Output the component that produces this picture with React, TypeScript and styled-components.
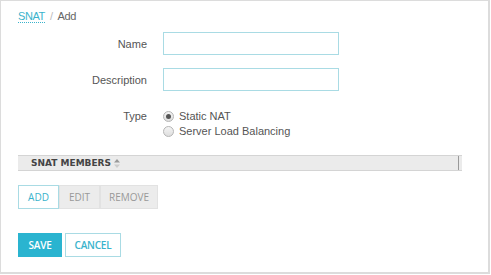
import React from "react";
import styled, { createGlobalStyle } from "styled-components";

const GlobalStyle = createGlobalStyle`
  html, body {
    margin: 0;
    padding: 0;
    background: #ffffff;
  }
  body {
    font-family: "Liberation Sans", Arial, sans-serif;
    font-size: 11px;
    color: #555;
  }
`;

const Frame = styled.div`
  box-sizing: border-box;
  width: 490px;
  height: 274px;
  border: 1px solid #dcdcdc;
  border-right-width: 2px;
  border-bottom-width: 2px;
  padding: 8px 27px 0 17px;
`;

const Breadcrumb = styled.div`
  display: flex;
  align-items: center;
  gap: 5px;
  height: 14px;
  font-size: 11px;
  letter-spacing: -0.4px;
  color: #666;
`;

const CrumbLink = styled.span`
  color: #3ab3cc;
  border-bottom: 1px dotted #3ab3cc;
  line-height: 12px;
`;

const Sep = styled.span`
  color: #bbb;
`;

const Form = styled.div`
  display: grid;
  grid-template-columns: 129px 1fr;
  column-gap: 16px;
  row-gap: 13px;
  margin-top: 9px;
  align-items: center;
`;

const Label = styled.label`
  text-align: right;
  color: #555;
  font-size: 11px;
`;

const TypeLabel = styled(Label)`
  align-self: start;
  padding-top: 6px;
`;

const TextInput = styled.input`
  box-sizing: border-box;
  width: 176px;
  height: 23px;
  border: 1px solid #a9dbe4;
  outline: none;
  background: #fff;
`;

const RadioGroup = styled.div`
  display: flex;
  flex-direction: column;
  gap: 2px;
  margin-top: 6px;
`;

const RadioRow = styled.div`
  display: flex;
  align-items: center;
  gap: 5px;
  height: 13px;
  line-height: 13px;
  color: #555;
`;

const RadioDot = styled.span<{ $checked?: boolean }>`
  box-sizing: border-box;
  width: 11px;
  height: 11px;
  border-radius: 50%;
  border: 1px solid #b5b5b5;
  background: linear-gradient(#f4f4f4, #dedede);
  display: flex;
  align-items: center;
  justify-content: center;
  &::after {
    content: "";
    width: 5px;
    height: 5px;
    border-radius: 50%;
    background: ${(p) => (p.$checked ? "#555" : "transparent")};
  }
`;

const TableHeader = styled.div`
  box-sizing: border-box;
  display: flex;
  align-items: center;
  margin-top: 17px;
  width: 444px;
  height: 16px;
  background: #ebebeb;
  border-top: 1px solid #d4d4d4;
  border-bottom: 1px solid #d4d4d4;
  padding-left: 13px;
`;

const HeaderCell = styled.div`
  flex: 1;
  display: flex;
  align-items: center;
  gap: 3px;
  height: 100%;
  border-right: 1px solid #999;
  margin-right: 3px;
  font-family: "DejaVu Sans", Verdana, sans-serif;
  font-weight: bold;
  font-size: 9px;
  color: #444;
`;

const ButtonBar = styled.div`
  display: flex;
  margin-top: 14px;
`;

const ToolButton = styled.button<{ $active?: boolean; $w: number }>`
  box-sizing: border-box;
  width: ${(p) => p.$w}px;
  height: 24px;
  padding: 0;
  font-family: "Open Sans", "Liberation Sans", sans-serif;
  font-size: 10px;
  border: 1px solid ${(p) => (p.$active ? "#a9dbe4" : "#e2e2e2")};
  background: ${(p) => (p.$active ? "#fff" : "#ececec")};
  color: ${(p) => (p.$active ? "#3ab3cc" : "#999")};
  cursor: pointer;
`;

const ActionBar = styled.div`
  display: flex;
  gap: 3px;
  margin-top: 24px;
`;

const ActionButton = styled.button<{ $primary?: boolean; $w: number }>`
  box-sizing: border-box;
  width: ${(p) => p.$w}px;
  height: 24px;
  padding: 0;
  font-family: "Open Sans", "Liberation Sans", sans-serif;
  font-size: 10px;
  font-weight: 600;
  letter-spacing: -0.2px;
  border: 1px solid ${(p) => (p.$primary ? "#2ab4d0" : "#a9dbe4")};
  background: ${(p) => (p.$primary ? "#2ab4d0" : "#fff")};
  color: ${(p) => (p.$primary ? "#fff" : "#3ab3cc")};
  cursor: pointer;
`;

function SortIcon() {
  return (
    <svg width="6" height="9" viewBox="0 0 6 9">
      <path d="M3 0 L6 3.5 H0 Z" fill="#999" />
      <path d="M3 9 L6 5.5 H0 Z" fill="#ccc" />
    </svg>
  );
}

export default function App() {
  return (
    <>
      <GlobalStyle />
      <Frame>
        <Breadcrumb>
          <CrumbLink>SNAT</CrumbLink>
          <Sep>/</Sep>
          <span>Add</span>
        </Breadcrumb>
        <Form>
          <Label>Name</Label>
          <TextInput />
          <Label>Description</Label>
          <TextInput />
          <TypeLabel>Type</TypeLabel>
          <RadioGroup>
            <RadioRow>
              <RadioDot $checked />
              Static NAT
            </RadioRow>
            <RadioRow>
              <RadioDot />
              Server Load Balancing
            </RadioRow>
          </RadioGroup>
        </Form>
        <TableHeader>
          <HeaderCell>
            SNAT MEMBERS <SortIcon />
          </HeaderCell>
        </TableHeader>
        <ButtonBar>
          <ToolButton $active $w={41}>ADD</ToolButton>
          <ToolButton $w={41}>EDIT</ToolButton>
          <ToolButton $w={58}>REMOVE</ToolButton>
        </ButtonBar>
        <ActionBar>
          <ActionButton $primary $w={44}>SAVE</ActionButton>
          <ActionButton $w={56}>CANCEL</ActionButton>
        </ActionBar>
      </Frame>
    </>
  );
}
